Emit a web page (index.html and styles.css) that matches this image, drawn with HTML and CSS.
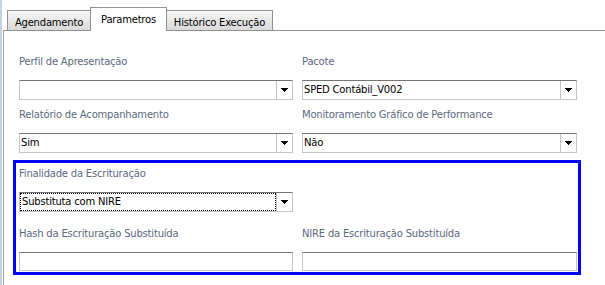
FILE: index.html
```html
<!DOCTYPE html>
<html>
<head>
<meta charset="utf-8">
<title>Parametros</title>
<link rel="stylesheet" href="styles.css">
</head>
<body>
<div class="page">
  <div class="tabs">
    <div class="tab tab-first">Agendamento</div>
    <div class="tab tab-active">Parametros</div>
    <div class="tab tab-last">Histórico Execução</div>
  </div>
  <div class="panel">
    <div class="row">
      <div class="field">
        <div class="label">Perfil de Apresentação</div>
        <div class="select"><span class="value"></span><span class="btn"><svg width="7" height="4" viewBox="0 0 7 4"><path d="M0 0h7v1H0zM1 1h5v1H1zM2 2h3v1H2zM3 3h1v1H3z" fill="#000"/></svg></span></div>
      </div>
      <div class="field">
        <div class="label">Pacote</div>
        <div class="select"><span class="value">SPED Contábil_V002</span><span class="btn"><svg width="7" height="4" viewBox="0 0 7 4"><path d="M0 0h7v1H0zM1 1h5v1H1zM2 2h3v1H2zM3 3h1v1H3z" fill="#000"/></svg></span></div>
      </div>
    </div>
    <div class="row row-next">
      <div class="field">
        <div class="label">Relatório de Acompanhamento</div>
        <div class="select"><span class="value">Sim</span><span class="btn"><svg width="7" height="4" viewBox="0 0 7 4"><path d="M0 0h7v1H0zM1 1h5v1H1zM2 2h3v1H2zM3 3h1v1H3z" fill="#000"/></svg></span></div>
      </div>
      <div class="field">
        <div class="label">Monitoramento Gráfico de Performance</div>
        <div class="select"><span class="value">Não</span><span class="btn"><svg width="7" height="4" viewBox="0 0 7 4"><path d="M0 0h7v1H0zM1 1h5v1H1zM2 2h3v1H2zM3 3h1v1H3z" fill="#000"/></svg></span></div>
      </div>
    </div>
    <div class="highlight">
      <div class="row row-inner">
        <div class="field">
          <div class="label">Finalidade da Escrituração</div>
          <div class="select"><span class="value value-focus">Substituta com NIRE</span><span class="btn"><svg width="7" height="4" viewBox="0 0 7 4"><path d="M0 0h7v1H0zM1 1h5v1H1zM2 2h3v1H2zM3 3h1v1H3z" fill="#000"/></svg></span></div>
        </div>
      </div>
      <div class="row row-inner row-hash">
        <div class="field">
          <div class="label">Hash da Escrituração Substituída</div>
          <div class="input"></div>
        </div>
        <div class="field">
          <div class="label">NIRE da Escrituração Substituída</div>
          <div class="input"></div>
        </div>
      </div>
    </div>
  </div>
</div>
</body>
</html>
```
FILE: styles.css
```css
html, body {
  margin: 0;
  padding: 0;
  background: #fff;
}
body {
  font-family: "DejaVu Sans", "Liberation Sans", sans-serif;
  font-size: 10px;
  letter-spacing: -0.2px;
  color: #000;
  width: 605px;
  height: 285px;
  overflow: hidden;
}
.page {
  border-left: 2px solid #c3d2e8;
  padding-left: 1px;
  height: 285px;
  box-sizing: border-box;
  display: flex;
  flex-direction: column;
}
.tabs {
  display: flex;
  align-items: flex-end;
  height: 30px;
  padding-left: 4px;
  flex: none;
}
.tab {
  box-sizing: border-box;
  height: 20px;
  border: 1px solid #919191;
  border-bottom: none;
  background: linear-gradient(#f7f7f7, #d9d9d9);
  text-align: center;
  line-height: 12px;
  padding-top: 6px;
  white-space: nowrap;
}
.tab-first {
  width: 83px;
  border-right: none;
}
.tab-active {
  width: 77px;
  height: 24px;
  margin-bottom: -1px;
  background: #fff;
  position: relative;
  z-index: 1;
}
.tab-last {
  width: 106px;
  border-left: none;
}
.panel {
  flex: 1;
  border-top: 1px solid #919191;
  border-left: 1px solid #a3a3a3;
  padding: 25px 0 0 9px;
}
.row {
  display: grid;
  grid-template-columns: 274px 275px;
  column-gap: 9px;
  padding-left: 6px;
}
.row-next {
  margin-top: 9px;
}
.row-inner {
  padding-left: 0;
}
.row-hash {
  margin-top: 16px;
}
.label {
  color: #5b6a7f;
  line-height: 12px;
  height: 12px;
  margin-bottom: 12px;
  white-space: nowrap;
}
.select {
  box-sizing: border-box;
  height: 20px;
  border: 1px solid #c4c4c4;
  border-top-color: #747474;
  display: flex;
  background: #fff;
}
.value {
  flex: 1;
  line-height: 18px;
  padding-left: 1px;
  white-space: nowrap;
  overflow: hidden;
}
.value-focus {
  box-sizing: border-box;
  border: 1px dotted #000;
  line-height: 16px;
  padding-left: 1px;
}
.btn {
  box-sizing: border-box;
  width: 16px;
  border-left: 1px solid #c4c4c4;
  display: flex;
  align-items: center;
  justify-content: center;
}
.btn svg {
  display: block;
  shape-rendering: crispEdges;
}
.input {
  box-sizing: border-box;
  height: 19px;
  border: 1px solid #c4c4c4;
  border-top-color: #747474;
  background: #fff;
}
.highlight {
  box-sizing: border-box;
  width: 568px;
  margin-top: 7px;
  border: 3px solid #0000ff;
  padding: 5px 1px 1px 3px;
}
```
